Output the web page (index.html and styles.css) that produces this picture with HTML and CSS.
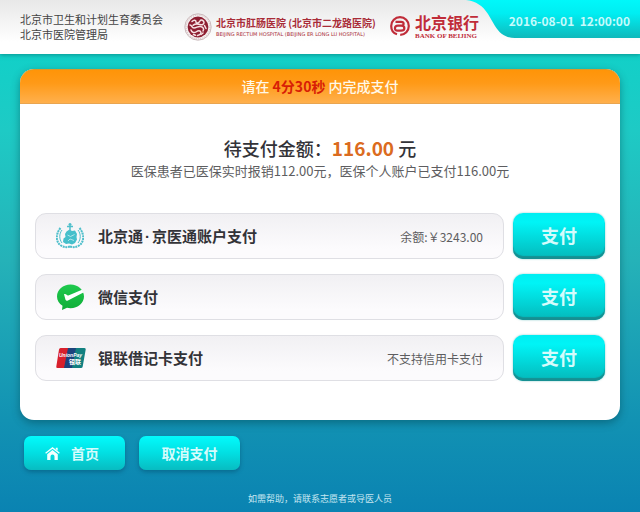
FILE: index.html
```html
<!DOCTYPE html>
<html lang="zh-CN">
<head>
<meta charset="utf-8">
<meta name="viewport" content="width=device-width, initial-scale=1">
<title>支付</title>
<link rel="stylesheet" href="styles.css">
</head>
<body>
<header class="top">
  <div class="dept"><div>北京市卫生和计划生育委员会</div><div>北京市医院管理局</div></div>
  <div class="hospital">
    <svg class="seal" viewBox="0 0 28 28" aria-hidden="true">
      <circle cx="14" cy="14" r="13.2" fill="#f6f0f0" stroke="#b9a3a6" stroke-width=".7"/>
      <circle cx="14" cy="14" r="11.9" fill="none" stroke="#cdb9bc" stroke-width="1" stroke-dasharray="1 1.2"/>
      <circle cx="14" cy="14" r="10.4" fill="#8e1f32"/>
      <g fill="none" stroke="#f7e3e5" stroke-width="1.5" stroke-linecap="round">
        <path d="M8 8.500c2-2 4-1.500 4 .5s3 1 4-1 4-.5 4 1.500-2 2.500-4 2-5-.8-7 .8"/>
        <path d="M6 12c2 0 1.500 3 4 3s4-2 6.500-1.500 4 2.500 2.500 4.500"/>
        <path d="M7 17c1 3 3.500 3 5 2s3-2 4.500-.5-.5 3.500-3 4"/>
        <path d="M20.500 12.500l1.500 3M9.500 21.500l2 .8M17 21.500l2-1.500"/>
      </g>
    </svg>
    <div class="hospital-name"><div class="zh">北京市肛肠医院 (北京市二龙路医院)</div><div class="en">BEIJING RECTUM HOSPITAL (BEIJING ER LONG LU HOSPITAL)</div></div>
  </div>
  <div class="bank">
    <svg class="bank-mark" viewBox="0 0 20 20" fill="none" stroke="#c02c39" aria-hidden="true">
      <path stroke-width="2.200" d="M7 18.300C3.500 17.200 1.200 13.800 1.200 10a8.800 8.800 0 0 1 17.600 0c0 4.800-3.800 8.700-8.600 8.800"/>
      <path stroke-width="2.200" d="M5.500 5.800H11c3.500 0 3.500 3.900 0 3.900H8M11 9.700c4.500 0 4.500 5 0 5H7.500c-3.500 0-3.500-5 .5-5"/>
    </svg>
    <div class="bank-name"><div class="zh">北京银行</div><div class="en">BANK OF BEIJING</div></div>
  </div>
  <div class="clock">
    <svg class="clock-shape" viewBox="0 0 174 38" preserveAspectRatio="none" aria-hidden="true">
      <defs><linearGradient id="clockFill" x1="0" y1="0" x2="0" y2="1"><stop offset="0" stop-color="#00f8fa"/><stop offset=".35" stop-color="#00eef2"/><stop offset="1" stop-color="#0fb9bb"/></linearGradient></defs>
      <path fill="url(#clockFill)" d="M0 0C10 1 17 6 22 14l7 12c5 8 11 12 20 12h125V0z"/>
    </svg>
    <time datetime="2016-08-01T12:00:00">2016-08-01&nbsp; 12:00:00</time>
  </div>
</header>

<main class="card">
  <div class="banner">请在 <strong>4分30秒</strong> 内完成支付</div>
  <div class="card-body">
    <h1 class="amount">待支付金额：<span>116.00</span> 元</h1>
    <p class="detail">医保患者已医保实时报销112.00元，医保个人账户已支付116.00元</p>
    <div class="methods">
      <div class="method">
        <div class="info">
          <svg class="icon" viewBox="0 0 28 28" fill="none" stroke="#4fbfcb" aria-hidden="true">
            <path stroke-width="2" stroke-dasharray="2 .7" d="M4.500 6C-.5 12-.5 20 5 23.500c3 2 6 2 9 1M23.500 6c5 6 5 14-.5 17.500-3 2-6 2-9 1"/>
            <path stroke-width="1" d="M6 8c-3 4-3 9 0 13M22 8c3 4 3 9 0 13"/>
            <path stroke="none" fill="#45bfcb" d="M10.500 9.500l3-2 2.500 1.500 3-.5 2 3.500-.5 3 .5 2.500-2 3.500-3 1.500-3-1-3 .5-3-2 .5-3.500 2-1.500-.5-3z"/>
            <path stroke="#c9eef1" stroke-width=".8" d="M11.500 13l3 1.500 4-2M12 19l2-2 4 1.500"/>
            <path stroke-width="1.500" d="M14 1v9M11 4.500h6M12.500 2.500h3"/>
          </svg>
          <span class="label">北京通<span class="dot">·</span>京医通账户支付</span>
          <span class="note">余额:￥3243.00</span>
        </div>
        <button class="btn pay" type="button">支付</button>
      </div>
      <div class="method">
        <div class="info">
          <svg class="icon" viewBox="0 0 28 28" aria-hidden="true">
            <defs><linearGradient id="bubble" x1="0" y1="0" x2="0" y2="1"><stop offset="0" stop-color="#1fc94e"/><stop offset="1" stop-color="#0fae37"/></linearGradient></defs>
            <path fill="url(#bubble)" d="M14.500 1.500C7 1.500 1 6.800 1 13.500c0 4 2 7 5.500 9.300L6 27l5-2.300c1 .3 2.300.5 3.500.5C22 25.200 28 20 28 13.500S22 1.500 14.500 1.500z"/>
            <path fill="#fff" d="M8 11.300c.8-.7 1.600-.4 3 .6.900.7 1.600.7 2.600.2L26 6.800c.8 1 1.200 1.800 1.400 2.600L12 17.400c-1.200.6-2 .3-2.500-.6z"/>
          </svg>
          <span class="label">微信支付</span>
        </div>
        <button class="btn pay" type="button">支付</button>
      </div>
      <div class="method">
        <div class="info">
          <svg class="icon card-icon" viewBox="0 0 30 20" aria-hidden="true">
            <path fill="#d8202c" d="M4.500 0H13L9 20H1.500Q0 20 .3 18.500L3 1.500Q3.300 0 4.500 0z"/>
            <path fill="#1c437c" d="M12 0h9l-4 20H8z"/>
            <path fill="#128080" d="M20 0h8.500Q30 0 29.700 1.500l-3 17Q26.500 20 25 20h-9z"/>
            <text class="up-en" x="3" y="9">UnionPay</text>
            <text class="up-zh" x="13" y="16">银联</text>
          </svg>
          <span class="label">银联借记卡支付</span>
          <span class="note">不支持信用卡支付</span>
        </div>
        <button class="btn pay" type="button">支付</button>
      </div>
    </div>
  </div>
</main>

<nav class="actions">
  <button class="btn nav-btn with-icon" type="button">
    <svg class="home" viewBox="0 0 15 13" aria-hidden="true"><path fill="none" stroke="#f2ffff" stroke-width="1.300" d="M.6 6.300L7.500.9l6.900 5.400"/><path fill="#f2ffff" d="M10.800.8h1.900v3l-1.900-1.500zM2.200 7.200L7.500 3l5.300 4.200V13H9.500V9.500a2 2 0 0 0-4 0V13H2.200z"/></svg>
    首页
  </button>
  <button class="btn nav-btn" type="button">取消支付</button>
</nav>
<footer class="help">如需帮助，请联系志愿者或导医人员</footer>
</body>
</html>
```
FILE: styles.css
```css
* { box-sizing: border-box; }

body {
  margin: 0;
  min-height: 100vh;
  display: flex;
  flex-direction: column;
  font-family: "Noto Sans CJK SC", sans-serif;
  color: #333338;
  background: linear-gradient(#12d0c8 54px, #1ecac5 130px, #25b2b8 260px, #1292b3 420px, #0a83b2 100%);
}

.top {
  position: relative;
  display: flex;
  align-items: center;
  height: 54px;
  padding-left: 20px;
  background: linear-gradient(#e8e8e8, #fff 42px);
  box-shadow: 0 1px 4px rgba(0, 90, 90, .5);
}

.dept {
  flex: 0 0 164px;
  font-size: 11px;
  line-height: 15px;
  color: #444;
}

.hospital, .bank {
  display: flex;
  align-items: center;
  gap: 4px;
  white-space: nowrap;
}

.hospital { flex: 0 0 206px; color: #a92c38; }
.seal { width: 28px; height: 28px; }
.hospital-name .zh { font-size: 10px; line-height: 14px; font-weight: 700; }
.hospital-name .en { font: 5px/8px "DejaVu Sans", sans-serif; }

.bank { gap: 5px; padding-bottom: 2px; color: #c02c39; }
.bank-mark { width: 20px; height: 20px; }
.bank-name .zh { font-size: 16px; line-height: 19px; font-weight: 700; }
.bank-name .en { font: bold 7px/8px "Liberation Serif", serif; }

.clock {
  position: absolute;
  top: 0;
  right: 0;
  width: 174px;
  height: 38px;
  padding-right: 10px;
  text-align: right;
  font-size: 12px;
  line-height: 42px;
  font-weight: 700;
  color: #c5fbfc;
}
.clock-shape { position: absolute; inset: 0; width: 100%; height: 100%; }
.clock time { position: relative; }

.card {
  margin: 15px 20px 0;
  border-radius: 14px;
  background: #fff;
  box-shadow: 0 3px 8px rgba(0, 60, 70, .45);
}

.banner {
  height: 35px;
  border-radius: 14px 14px 0 0;
  background: linear-gradient(#ff9408, #ff9a17 40%, #ffb04d);
  border-top: 1px solid #d99a2b;
  border-bottom: 1px solid #e9a550;
  text-align: center;
  font-size: 14px;
  line-height: 32px;
  font-weight: 500;
  color: #fff8e8;
}
.banner strong { font-weight: 700; color: #d81e06; }

.card-body { padding: 31px 15px 39px; }

.amount {
  margin: 0;
  text-align: center;
  font-size: 18px;
  line-height: 26px;
  font-weight: 500;
}
.amount span { font-size: 19px; font-weight: 700; color: #db6b20; }

.detail {
  margin: 0 0 32px;
  text-align: center;
  font-size: 13px;
  line-height: 20px;
  color: #5d5d60;
}

.methods { display: grid; gap: 15px; }
.method { display: flex; gap: 9px; }

.info {
  flex: 1;
  display: flex;
  align-items: center;
  height: 46px;
  padding: 0 20px;
  border: 1px solid #dfdfe4;
  border-radius: 11px;
  background: linear-gradient(#f1f0f3, #fcfbfd 80%);
}
.icon { width: 28px; height: 28px; margin-right: 14px; }
.card-icon { width: 30px; height: 20px; margin-right: 12px; }
.up-en { font: italic bold 5px "Liberation Sans", sans-serif; fill: #fff; }
.up-zh { font: bold 6px "Noto Sans CJK SC", sans-serif; fill: #fff; }
.label { font-size: 15px; line-height: 22px; font-weight: 700; }
.dot { padding: 0 2px; font-family: "Liberation Sans", sans-serif; }
.note { margin-left: auto; font-size: 12px; color: #5d5d60; }

.btn {
  border: 0;
  padding: 0;
  font-family: inherit;
  font-weight: 700;
  color: #d5fcfc;
  cursor: pointer;
}

.pay {
  flex: 0 0 92px;
  height: 46px;
  padding-bottom: 3px;
  border-radius: 10px;
  background: linear-gradient(#00eef2, #00f4f6 20%, #04b8ba);
  box-shadow: inset 0 -3px 1px #168f92, 0 0 2px rgba(0, 150, 150, .5);
  font-size: 18px;
}

.actions {
  display: flex;
  gap: 14px;
  margin: 16px 24px 0;
}
.nav-btn {
  display: flex;
  align-items: center;
  justify-content: center;
  gap: 11px;
  width: 101px;
  height: 34px;
  border-radius: 7px;
  background: linear-gradient(#02fbfc, #02dfe2 50%, #08bcc1);
  box-shadow: 0 2px 4px rgba(0, 60, 90, .4);
  font-size: 14px;
}
.with-icon { padding-right: 5px; }
.home { width: 15px; height: 13px; }

.help {
  margin: auto 0 6px;
  text-align: center;
  font-size: 9px;
  line-height: 14px;
  color: #c5e6f1;
}
```
